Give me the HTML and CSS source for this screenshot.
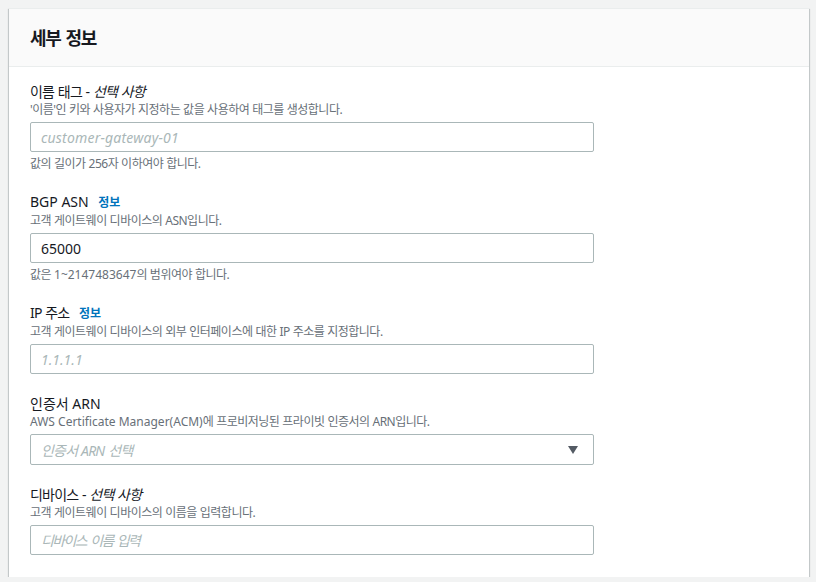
FILE: index.html
```html
<!DOCTYPE html>
<html lang="ko">
<head>
<meta charset="utf-8">
<link rel="stylesheet" href="styles.css">
</head>
<body>
<div class="card">
  <div class="card-header"><h2 class="title">세부 정보</h2></div>
  <div class="card-body">
    <div class="field">
      <div class="label ko">이름 태그 - <i>선택 사항</i></div>
      <div class="desc">'이름'인 키와 사용자가 지정하는 값을 사용하여 태그를 생성합니다.</div>
      <div class="input"><span class="ph ph-wide">customer-gateway-01</span></div>
      <div class="constraint">값의 길이가 256자 이하여야 합니다.</div>
    </div>
    <div class="field">
      <div class="label">BGP ASN <a class="info">정보</a></div>
      <div class="desc">고객 게이트웨이 디바이스의 ASN입니다.</div>
      <div class="input"><span class="val">65000</span></div>
      <div class="constraint">값은 <span class="en">1~2147483647</span>의 범위여야 합니다.</div>
    </div>
    <div class="field">
      <div class="label ko">IP 주소 <a class="info">정보</a></div>
      <div class="desc">고객 게이트웨이 디바이스의 외부 인터페이스에 대한 IP 주소를 지정합니다.</div>
      <div class="input"><span class="ph">1.1.1.1</span></div>
    </div>
    <div class="field">
      <div class="label">인증서 ARN</div>
      <div class="desc"><span class="en">AWS Certificate Manager(ACM)</span>에 프로비저닝된 프라이빗 인증서의 ARN입니다.</div>
      <div class="input select"><span class="ph ph-select">인증서 ARN 선택</span><span class="caret"></span></div>
    </div>
    <div class="field">
      <div class="label ko">디바이스 - <i>선택 사항</i></div>
      <div class="desc">고객 게이트웨이 디바이스의 이름을 입력합니다.</div>
      <div class="input"><span class="ph ph-ko">디바이스 이름 입력</span></div>
    </div>
  </div>
</div>
</body>
</html>
```
FILE: styles.css
```css
html, body {
  margin: 0;
  padding: 0;
  background: #f2f3f3;
}
body {
  font-family: "Noto Sans", "Noto Sans CJK KR", sans-serif;
  color: #16191f;
  padding-top: 8px;
}
.card {
  margin-left: 9px;
  width: 800px;
  background: #fff;
  border-top: 1px solid #eaeded;
  box-shadow: 0 1px 1px 0 rgba(0, 28, 36, 0.3), 1px 1px 1px 0 rgba(0, 28, 36, 0.15), -1px 1px 1px 0 rgba(0, 28, 36, 0.15);
}
.card-header {
  background: #fafafa;
  border-bottom: 1px solid #eaeded;
  height: 58px;
  box-sizing: border-box;
  padding: 18px 20px 0 21px;
}
.title {
  margin: 0;
  font-size: 18px;
  line-height: 22px;
  font-weight: 700;
  letter-spacing: -1.2px;
  word-spacing: 1.2px;
}
.card-body {
  padding: 15px 20px 22px 21px;
  display: flex;
  flex-direction: column;
  gap: 20px;
}
.field {
  display: flex;
  flex-direction: column;
}
.label {
  font-size: 14px;
  line-height: 20px;
}
.label.ko {
  letter-spacing: -0.8px;
  word-spacing: 0.8px;
}
.label i {
  font-style: italic;
}
.info {
  font-size: 12px;
  font-weight: 700;
  color: #0073bb;
  margin-left: 6px;
  letter-spacing: 0;
}
.desc, .constraint {
  font-size: 12px;
  line-height: 16px;
  color: #687078;
  letter-spacing: -0.5px;
  word-spacing: 0.3px;
}
.en {
  letter-spacing: 0;
  word-spacing: 0;
}
.input {
  margin-top: 4px;
  width: 564px;
  height: 30px;
  box-sizing: border-box;
  border: 1px solid #aab7b8;
  border-radius: 2px;
  padding: 0 10px;
  display: flex;
  align-items: center;
  font-size: 14px;
}
.ph {
  font-style: italic;
  color: #aab7b8;
}
.ph-wide {
  letter-spacing: 0.2px;
}
.ph-select {
  letter-spacing: -0.8px;
  word-spacing: 1px;
}
.ph-ko {
  letter-spacing: -1.6px;
  word-spacing: 2px;
}
.val {
  color: #16191f;
}
.constraint {
  margin-top: 4px;
}
.select {
  justify-content: space-between;
  height: 31px;
}
.caret {
  width: 0;
  height: 0;
  border-left: 5.5px solid transparent;
  border-right: 5.5px solid transparent;
  border-top: 8px solid #545b64;
  margin-right: 5px;
}
```
